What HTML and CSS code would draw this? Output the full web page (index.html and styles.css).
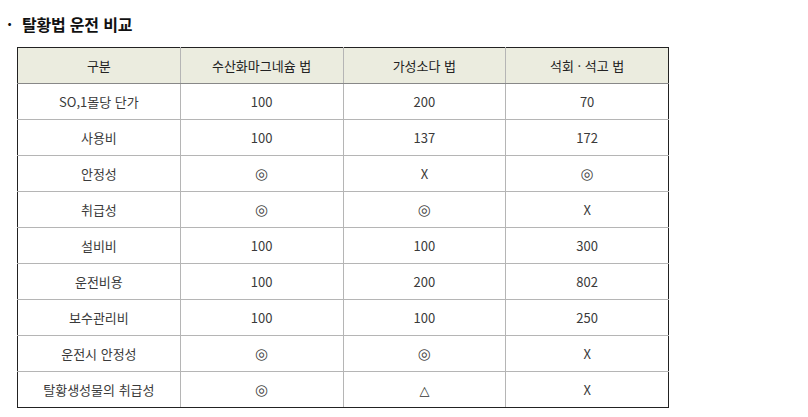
FILE: index.html
```html
<!DOCTYPE html>
<html lang="ko">
<head>
<meta charset="utf-8">
<link rel="stylesheet" href="styles.css">
</head>
<body>
<div class="page">
  <h3 class="title"><span class="dot">·</span>탈황법 운전 비교</h3>
  <table class="cmp">
    <colgroup><col class="c"><col class="c"><col class="c"><col class="c"></colgroup>
    <thead>
      <tr><th>구분</th><th>수산화마그네슘 법</th><th>가성소다 법</th><th>석회 · 석고 법</th></tr>
    </thead>
    <tbody>
      <tr><td>SO,1몰당 단가</td><td>100</td><td>200</td><td>70</td></tr>
      <tr><td>사용비</td><td>100</td><td>137</td><td>172</td></tr>
      <tr><td>안정성</td><td><span class="sym">◎</span></td><td>X</td><td><span class="sym">◎</span></td></tr>
      <tr><td>취급성</td><td><span class="sym">◎</span></td><td><span class="sym">◎</span></td><td>X</td></tr>
      <tr><td>설비비</td><td>100</td><td>100</td><td>300</td></tr>
      <tr><td>운전비용</td><td>100</td><td>200</td><td>802</td></tr>
      <tr><td>보수관리비</td><td>100</td><td>100</td><td>250</td></tr>
      <tr><td>운전시 안정성</td><td><span class="sym">◎</span></td><td><span class="sym">◎</span></td><td>X</td></tr>
      <tr><td>탈황생성물의 취급성</td><td><span class="sym">◎</span></td><td><span class="tri">△</span></td><td>X</td></tr>
    </tbody>
  </table>
</div>
</body>
</html>
```
FILE: styles.css
```css
html, body { margin: 0; padding: 0; background: #fff; }
body { font-family: "Noto Sans CJK KR", "Noto Sans", sans-serif; color: #333; }
.page { padding: 13px 0 0 17px; }
.title {
  margin: 0 0 12px -10px;
  font-size: 16px;
  font-weight: bold;
  color: #111;
  line-height: 22px;
  letter-spacing: -0.2px;
}
.dot { display: inline-block; width: 15px; font-weight: bold; }
.cmp {
  border-collapse: collapse;
  width: 652px;
  table-layout: fixed;
  border: 1px solid #222;
  font-size: 13px;
}
.cmp th, .cmp td {
  height: 35px;
  padding: 0;
  text-align: center;
  vertical-align: middle;
  border: 1px solid #b5b5b5;
  color: #3a3a3a;
}
.cmp th { background: #ebecdf; font-weight: normal; color: #222; border-bottom-color: #888; }
.cmp tr > *:first-child { border-left: 1px solid #222; }
.cmp tr > *:last-child { border-right: 1px solid #222; }
.cmp thead th { border-top: 1px solid #222; }
.cmp tbody tr:last-child td { border-bottom: 1px solid #222; }
.sym { font-family: "DejaVu Sans", sans-serif; font-size: 15px; color: #444; }
.tri { font-family: "DejaVu Sans", sans-serif; font-size: 13px; color: #333; }
```
